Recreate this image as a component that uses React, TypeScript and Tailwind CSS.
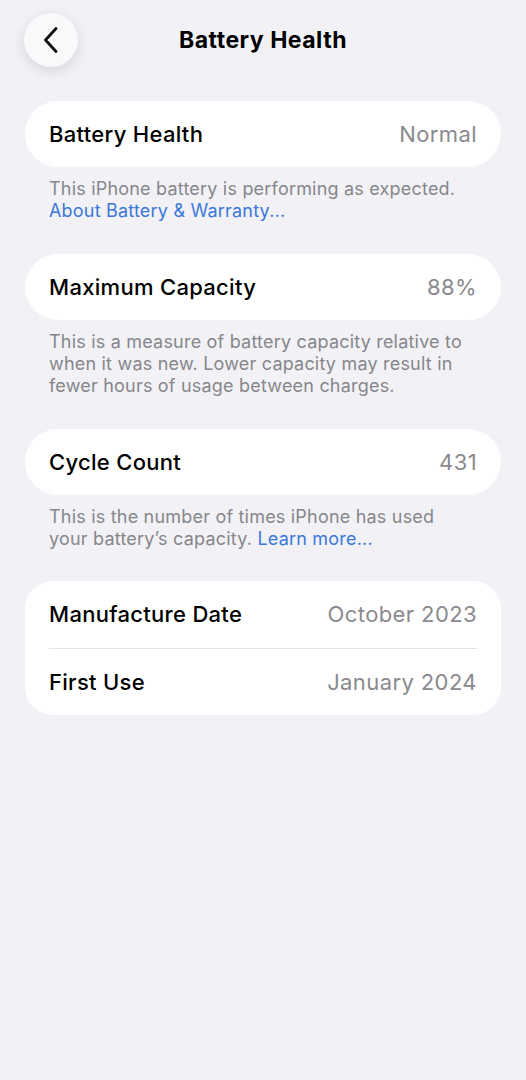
const rows = [
  {
    label: "Battery Health",
    value: "Normal",
    note: (
      <>
        This iPhone battery is performing as expected.
        <br />
        <span className="text-[#3a78d9]">About Battery &amp; Warranty...</span>
      </>
    ),
  },
  {
    label: "Maximum Capacity",
    value: "88%",
    note: (
      <>
        This is a measure of battery capacity relative to when it was new. Lower capacity may result in fewer hours of usage between charges.
      </>
    ),
  },
  {
    label: "Cycle Count",
    value: "431",
    note: (
      <>
        This is the number of times iPhone has used your battery’s capacity.{" "}
        <span className="text-[#3a78d9]">Learn more...</span>
      </>
    ),
  },
];

function Row({ label, value, h = "h-[66px]" }: { label: string; value: string; h?: string }) {
  return (
    <div className={`flex ${h} items-center justify-between px-[24px]`}>
      <span className="text-[22px] font-medium tracking-[0.3px] text-black">{label}</span>
      <span className="text-[22px] tracking-[0.4px] text-[#8a8a8e]">{value}</span>
    </div>
  );
}

export default function App() {
  return (
    <main
      className="min-h-[1080px] w-full bg-[#f2f2f6] px-[25px] pt-[13px]"
      style={{ fontFamily: "Inter, 'Noto Sans', sans-serif" }}
    >
      <header className="relative flex h-[54px] items-center justify-center">
        <button className="absolute left-[-1px] top-0 flex h-[54px] w-[54px] items-center justify-center rounded-full bg-[#f9f9fb] shadow-[0_4px_14px_rgba(0,0,0,0.12)]">
          <svg width="16" height="26" viewBox="0 0 16 26" fill="none">
            <path d="M13 1.5 L2.5 13 L13 24.5" stroke="#111" strokeWidth="2.8" strokeLinecap="round" strokeLinejoin="round" />
          </svg>
        </button>
        <h1 className="text-[23px] font-bold tracking-[0.5px] text-black">Battery Health</h1>
      </header>

      <div className="pt-[34px]">
        {rows.map((r) => (
          <section key={r.label} className="mb-[32px]">
            <div className="rounded-[33px] bg-white">
              <Row label={r.label} value={r.value} />
            </div>
            <p className="pl-[24px] pr-[36px] pt-[11px] text-[18px] leading-[22px] tracking-[0.2px] text-[#86868b]">{r.note}</p>
          </section>
        ))}

        <div className="-mt-[1px] rounded-[28px] bg-white">
          <Row label="Manufacture Date" value="October 2023" h="h-[67px]" />
          <div className="mx-[24px] h-px bg-[#e4e4e8]" />
          <Row label="First Use" value="January 2024" />
        </div>
      </div>
    </main>
  );
}
